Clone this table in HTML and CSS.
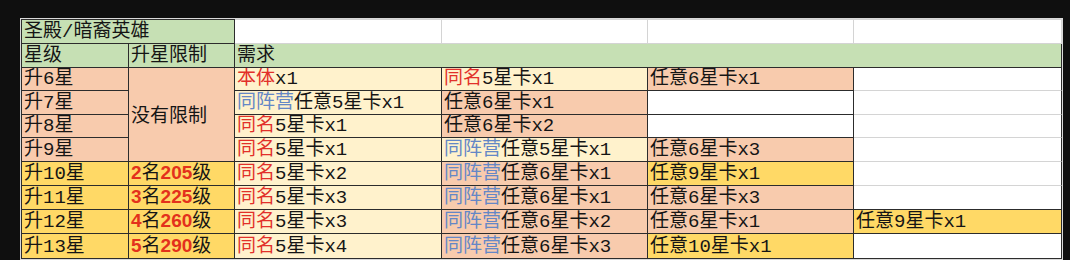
FILE: index.html
```html
<!DOCTYPE html>
<html lang="zh">
<head>
<meta charset="utf-8">
<title>圣殿/暗裔英雄</title>
<link rel="stylesheet" href="styles.css">
</head>
<body>
<div class="sheet">
  <table class="grid">
    <colgroup>
      <col class="c1"><col class="c2"><col class="c3"><col class="c4"><col class="c5"><col class="c6">
    </colgroup>
    <tr class="h25">
      <td colspan="2" class="g first top">圣殿/暗裔英雄</td>
      <td class="w wtop"></td>
      <td class="w wtop"></td>
      <td class="w wtop"></td>
      <td class="w wtop"></td>
    </tr>
    <tr class="h24">
      <td class="g first">星级</td>
      <td class="g">升星限制</td>
      <td class="g" colspan="4">需求</td>
    </tr>
    <tr class="h23">
      <td class="s first">升6星</td>
      <td class="s mid" rowspan="4">没有限制</td>
      <td class="c"><span class="r">本体</span>x1</td>
      <td class="c"><span class="r">同名</span>5星卡x1</td>
      <td class="s">任意6星卡x1</td>
      <td class="w"></td>
    </tr>
    <tr class="h24">
      <td class="s first">升7星</td>
      <td class="c"><span class="b">同阵营</span>任意5星卡x1</td>
      <td class="s">任意6星卡x1</td>
      <td class="e"></td>
      <td class="w"></td>
    </tr>
    <tr class="h23">
      <td class="s first">升8星</td>
      <td class="c"><span class="r">同名</span>5星卡x1</td>
      <td class="s">任意6星卡x2</td>
      <td class="e"></td>
      <td class="w"></td>
    </tr>
    <tr class="h24">
      <td class="s first">升9星</td>
      <td class="c"><span class="r">同名</span>5星卡x1</td>
      <td class="c"><span class="b">同阵营</span>任意5星卡x1</td>
      <td class="s">任意6星卡x3</td>
      <td class="w"></td>
    </tr>
    <tr class="h24">
      <td class="y first">升10星</td>
      <td class="y"><span class="n">2</span>名<span class="n">205</span>级</td>
      <td class="c"><span class="r">同名</span>5星卡x2</td>
      <td class="s"><span class="b">同阵营</span>任意6星卡x1</td>
      <td class="y">任意9星卡x1</td>
      <td class="w"></td>
    </tr>
    <tr class="h23">
      <td class="y first">升11星</td>
      <td class="y"><span class="n">3</span>名<span class="n">225</span>级</td>
      <td class="c"><span class="r">同名</span>5星卡x3</td>
      <td class="s"><span class="b">同阵营</span>任意6星卡x1</td>
      <td class="s">任意6星卡x3</td>
      <td class="e"></td>
    </tr>
    <tr class="h24">
      <td class="y first">升12星</td>
      <td class="y"><span class="n">4</span>名<span class="n">260</span>级</td>
      <td class="c"><span class="r">同名</span>5星卡x3</td>
      <td class="s"><span class="b">同阵营</span>任意6星卡x2</td>
      <td class="s">任意6星卡x1</td>
      <td class="y">任意9星卡x1</td>
    </tr>
    <tr class="h25">
      <td class="y first">升13星</td>
      <td class="y"><span class="n">5</span>名<span class="n">290</span>级</td>
      <td class="c"><span class="r">同名</span>5星卡x4</td>
      <td class="s"><span class="b">同阵营</span>任意6星卡x3</td>
      <td class="y">任意10星卡x1</td>
      <td class="e"></td>
    </tr>
  </table>
</div>
</body>
</html>
```
FILE: styles.css
```css
html, body {
  margin: 0;
  padding: 0;
  background: #0f0f0f;
}

.sheet {
  margin: 18px 0 0 20px;
  width: 1041px;
  border: 1px solid #d9d9d9;
  background: #ffffff;
}

.grid {
  table-layout: fixed;
  width: 1041px;
  border-collapse: separate;
  border-spacing: 0;
  font-family: "Liberation Mono", "Noto Sans CJK SC", monospace;
  font-size: 19px;
  color: #151515;
}

.c1 { width: 108px; }
.c2 { width: 106px; }
.c3 { width: 207px; }
.c4 { width: 206px; }
.c5 { width: 206px; }
.c6 { width: 208px; }

.h25 { height: 25px; }
.h24 { height: 24px; }
.h23 { height: 23px; }

.grid td {
  box-sizing: border-box;
  padding: 0 2px;
  line-height: 21px;
  vertical-align: bottom;
  white-space: nowrap;
  overflow: hidden;
  border-right: 1px solid #2c2c2c;
  border-bottom: 1px solid #2c2c2c;
  background: #ffffff;
}

.grid td.first { border-left: 1px solid #2c2c2c; }
.grid td.top { border-top: 1px solid #2c2c2c; }
.grid td.wtop {
  border-top: 1px solid #d4d4d4;
  border-right-color: #d4d4d4;
}

.grid td.g { background: #c6e0b4; }
.grid td.s { background: #f8cbad; }
.grid td.c { background: #fff2cc; }
.grid td.y { background: #ffd966; }
.grid td.w { background: #ffffff; border-bottom-color: #d4d4d4; }
.grid td.e { background: #ffffff; }

.grid td.mid {
  vertical-align: middle;
  padding-top: 6px;
}

.r { color: #e2302a; }
.b { color: #6487c6; }
.n {
  font-family: "Liberation Sans", Arial, sans-serif;
  font-weight: 700;
  color: #e3311c;
}
```
